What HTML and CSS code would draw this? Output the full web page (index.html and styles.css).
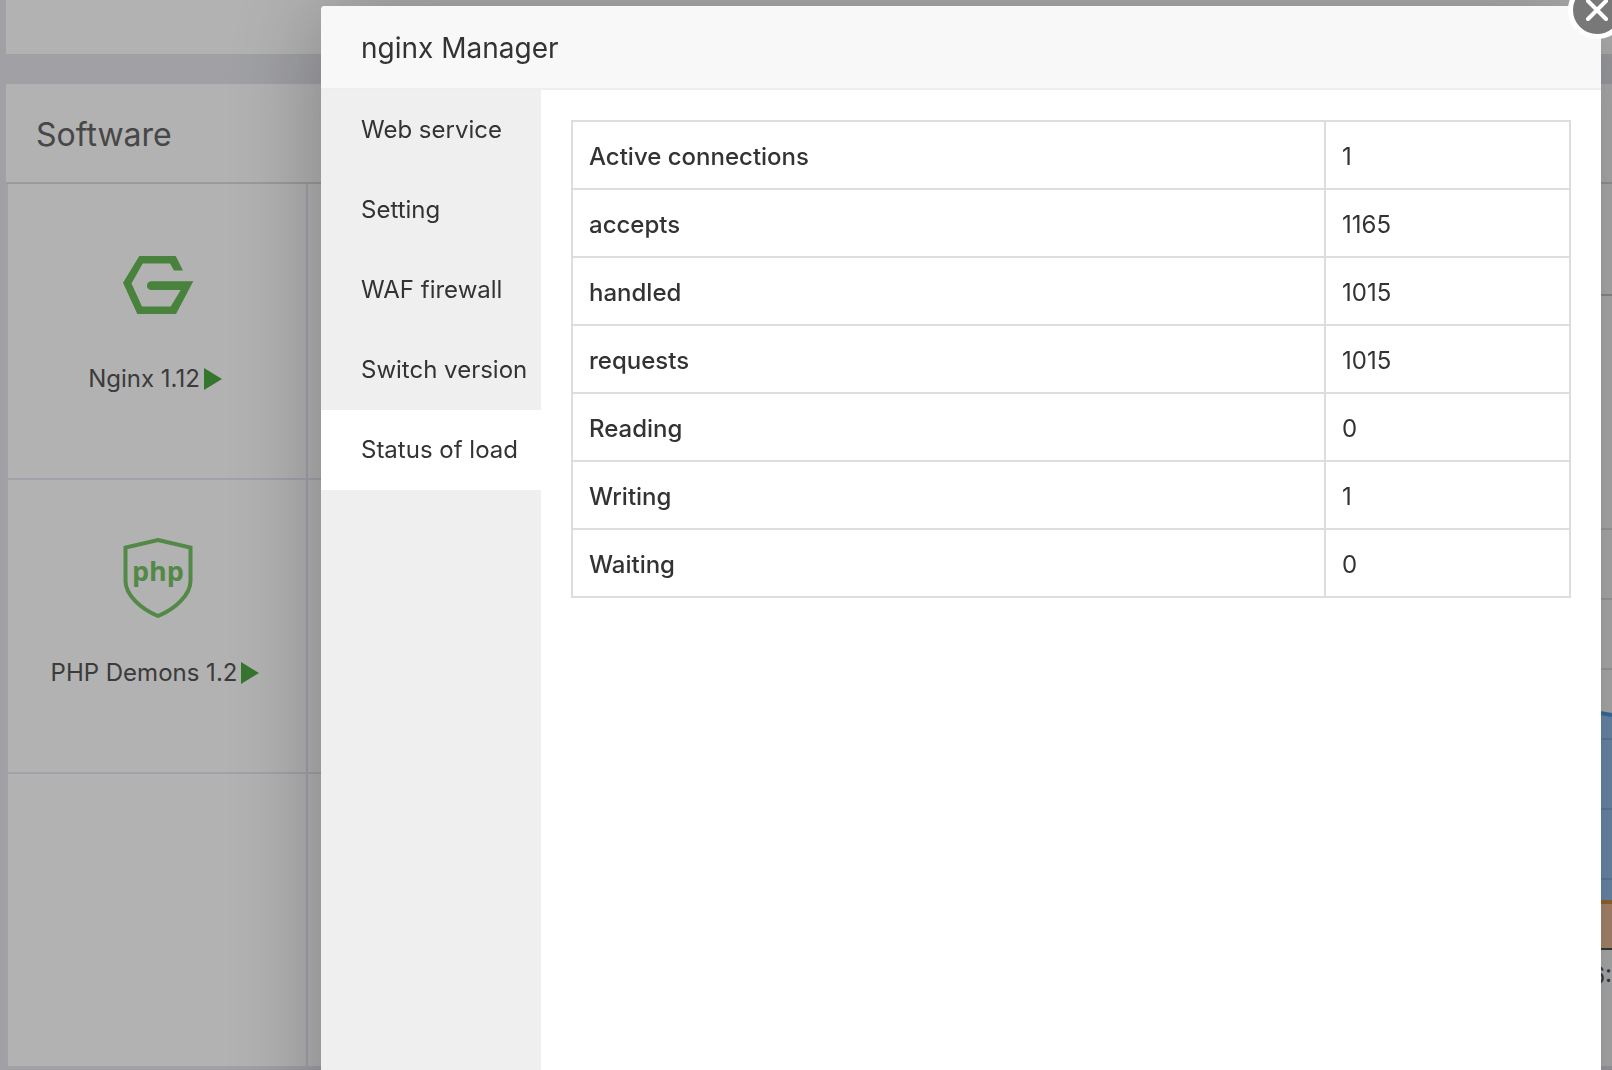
FILE: index.html
```html
<!DOCTYPE html>
<html lang="en">
<head>
<meta charset="utf-8">
<meta name="viewport" content="width=device-width, initial-scale=1">
<title>nginx Manager</title>
<link rel="stylesheet" href="styles.css">
</head>
<body>
<main class="page">
  <section class="card card-top"></section>
  <div class="columns">
    <section class="card">
      <h2 class="card-title">Software</h2>
      <div class="soft-grid">
        <div class="soft">
          <svg class="soft-icon" viewBox="0 0 72 80" aria-hidden="true"><path d="M17.300 12H53.700L61 26.500H52L48 19.500H20.700L9.500 39.500 20 62.500H48.700L58.700 46H29.300A4.350 4.350 0 0 1 29.300 37.300H71.300L54 70H15.300L1 38.700z" fill="#68bb57"/></svg>
          <span class="soft-name">Nginx 1.12<svg class="play" viewBox="0 0 18 22" aria-hidden="true"><path d="M0 0 18 11 0 22z"/></svg></span>
        </div>
        <div class="soft"></div>
        <div class="soft">
          <svg class="soft-icon" viewBox="0 0 72 80" aria-hidden="true"><path d="M36 2 68.500 9.500V43C68.500 57 53 71 36 78 19 71 3.500 57 3.500 43V9.500z" fill="none" stroke="#76c466" stroke-width="4"/><text x="36" y="43" class="shield-text">php</text></svg>
          <span class="soft-name">PHP Demons 1.2<svg class="play" viewBox="0 0 18 22" aria-hidden="true"><path d="M0 0 18 11 0 22z"/></svg></span>
        </div>
        <div class="soft"></div>
        <div class="soft"></div>
        <div class="soft"></div>
      </div>
    </section>
    <section class="card card-chart">
      <h2 class="card-title"></h2>
      <div class="chart-bar"></div>
      <svg class="chart" aria-hidden="true">
        <svg width="100%" height="653" viewBox="0 0 100 653" preserveAspectRatio="none">
          <path d="M0 440 98.500 416.500 100 419V607H0z" class="area-up"/>
          <path d="M0 607H100V653H0z" class="area-down"/>
          <path d="M0 440 98.500 416.500 100 419" class="line-up"/>
          <path d="M0 606H100" class="line-down"/>
        </svg>
        <g class="gridlines">
          <line x1="0" x2="100%" y1="233" y2="233"/>
          <line x1="0" x2="100%" y1="303" y2="303"/>
          <line x1="0" x2="100%" y1="373" y2="373"/>
          <line x1="0" x2="100%" y1="443" y2="443"/>
          <line x1="0" x2="100%" y1="513" y2="513"/>
          <line x1="0" x2="100%" y1="583" y2="583"/>
        </g>
        <line x1="0" x2="100%" y1="653" y2="653" class="axis"/>
        <text x="100%" y="688" class="tick">6:</text>
      </svg>
    </section>
  </div>
</main>

<div class="overlay">
  <div class="modal" role="dialog" aria-labelledby="modal-title">
    <button class="close" type="button" aria-label="Close"><svg viewBox="0 0 24 24" aria-hidden="true"><path d="M3 3 21 21M21 3 3 21"/></svg></button>
    <h1 class="modal-title" id="modal-title">nginx Manager</h1>
    <div class="modal-body">
      <nav class="menu">
        <a href="#service">Web service</a>
        <a href="#setting">Setting</a>
        <a href="#waf">WAF firewall</a>
        <a href="#version">Switch version</a>
        <a href="#status" class="active">Status of load</a>
      </nav>
      <div class="content">
        <table class="status">
          <colgroup><col><col class="col-value"></colgroup>
          <tbody>
            <tr><th scope="row">Active connections</th><td>1</td></tr>
            <tr><th scope="row">accepts</th><td>1165</td></tr>
            <tr><th scope="row">handled</th><td>1015</td></tr>
            <tr><th scope="row">requests</th><td>1015</td></tr>
            <tr><th scope="row">Reading</th><td>0</td></tr>
            <tr><th scope="row">Writing</th><td>1</td></tr>
            <tr><th scope="row">Waiting</th><td>0</td></tr>
          </tbody>
        </table>
      </div>
    </div>
  </div>
</div>
</body>
</html>
```
FILE: styles.css
```css
* {
  box-sizing: border-box;
}

body {
  margin: 0;
  overflow: hidden;
  background: #e5e6ec;
  color: #333;
  font: 24px/34px Inter, "Liberation Sans", sans-serif;
}

h1,
h2 {
  margin: 0;
  font-weight: 400;
}

/* Dashboard behind the dialog */
.page {
  display: flex;
  flex-direction: column;
  gap: 30px;
  padding-left: 6px;
}

.card {
  background: #fff;
}

.card-top {
  height: 54px;
}

.columns {
  display: grid;
  grid-template-columns: 602px 1fr;
  gap: 30px;
}

.card-title {
  height: 100px;
  padding: 2px 30px 0;
  border-bottom: 2px solid #ddd;
  color: #666;
  font-size: 32px;
  line-height: 98px;
}

.soft-grid {
  display: grid;
  grid-template-columns: 300px 300px;
  grid-template-rows: 296px;
  grid-auto-rows: 294px;
  border-left: 2px solid #e8e7f4;
}

.soft {
  display: flex;
  flex-direction: column;
  align-items: center;
  justify-content: flex-end;
  gap: 38px;
  padding: 0 0 82px 2px;
  border-right: 2px solid #e8e7f4;
  border-bottom: 2px solid #e8e7f4;
}

.soft-icon {
  width: 72px;
  height: 80px;
}

.soft-name {
  display: flex;
  align-items: center;
  gap: 4px;
  padding-right: 6px;
  color: #555;
}

.play {
  width: 18px;
  height: 22px;
  fill: #4da943;
}

.shield-text {
  fill: #76c466;
  font: 700 27px "Open Sans", sans-serif;
  text-anchor: middle;
}

.card-chart {
  border-bottom: 2px solid #e8e7f4;
}

.chart-bar {
  height: 112px;
  border-bottom: 2px solid #ccc;
}

.chart {
  display: block;
  width: 100%;
  height: 770px;
}

.gridlines {
  stroke: rgba(0, 0, 0, 0.1);
  stroke-width: 2;
}

.area-up {
  fill: #9ecbfc;
}

.area-down {
  fill: #f8c8a0;
}

.line-up,
.line-down {
  fill: none;
  stroke: #5a9cf0;
  stroke-width: 4;
  vector-effect: non-scaling-stroke;
}

.line-down {
  stroke: #dc9448;
}

.axis {
  stroke: #555;
  stroke-width: 2;
}

.tick {
  fill: #555;
  text-anchor: end;
}

/* Dialog */
.overlay {
  position: fixed;
  inset: 0;
  overflow: hidden;
  padding: 6px 11px 0 321px;
  background: rgba(0, 0, 0, 0.3);
}

.modal {
  position: relative;
  display: flex;
  flex-direction: column;
  min-height: 110vh;
  border-radius: 4px;
  background: #fff;
  box-shadow: 2px 2px 100px rgba(0, 0, 0, 0.3);
}

.modal-title {
  padding: 2px 40px 0;
  border-bottom: 2px solid #eee;
  border-radius: 4px 4px 0 0;
  background: #f8f8f8;
  font-size: 28px;
  line-height: 80px;
}

.close {
  position: absolute;
  top: -25px;
  right: -25px;
  width: 58px;
  height: 58px;
  padding: 12px;
  border: 5px solid #fff;
  border-radius: 50%;
  background: #787878;
}

.close svg {
  display: block;
  width: 24px;
  height: 24px;
  fill: none;
  stroke: #fff;
  stroke-width: 4;
  stroke-linecap: round;
}

.modal-body {
  display: flex;
  flex: 1;
}

.menu {
  flex: 0 0 220px;
  background: #efefef;
}

.menu a {
  display: block;
  padding-left: 40px;
  color: #333;
  line-height: 80px;
  text-decoration: none;
  white-space: nowrap;
}

.menu .active {
  background: #fff;
}

.content {
  flex: 1;
  padding: 30px;
}

.status {
  width: 100%;
  border-collapse: collapse;
  table-layout: fixed;
}

.col-value {
  width: 245px;
}

.status th,
.status td {
  padding: 18px 16px 14px;
  border: 2px solid #ddd;
  font-weight: 400;
  text-align: left;
}

.status th {
  font-weight: 500;
}
```
